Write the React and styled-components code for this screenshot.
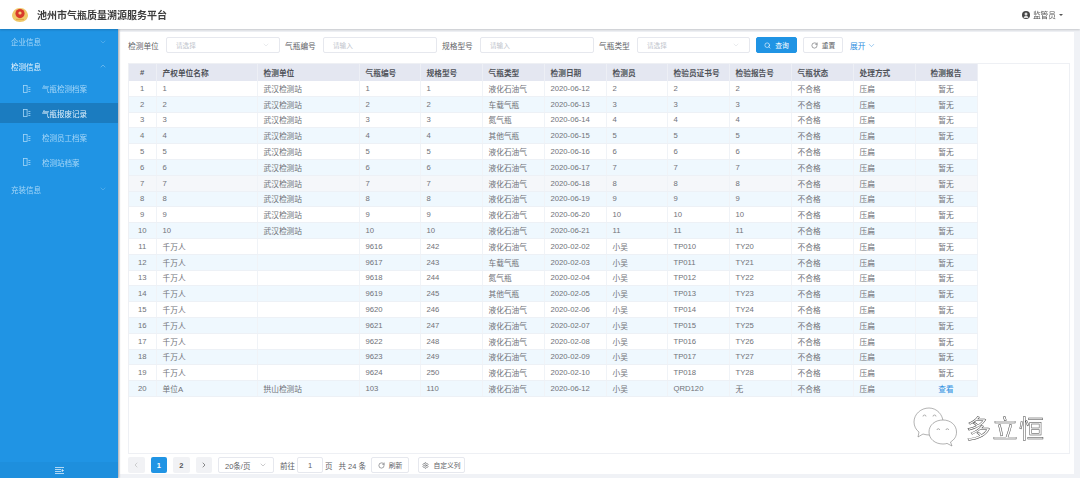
import React from "react";
import styled, { createGlobalStyle } from "styled-components";
import { ChevronDown, ChevronUp, ChevronLeft, ChevronRight, Search, RotateCw, Settings } from "lucide-react";

const GlobalStyle = createGlobalStyle`
  html, body { margin: 0; padding: 0; background: #fff; }
  body {
    font-family: "Liberation Sans", "Noto Sans CJK SC", sans-serif;
    color: #606266;
  }
  * { box-sizing: border-box; }
`;

const Page = styled.div`
  width: 1080px;
  height: 478px;
  overflow: hidden;
  position: relative;
`;

const Screen = styled.div`
  height: 100%;
  display: flex;
  flex-direction: column;
  filter: blur(0.6px);
`;

const Header = styled.header`
  height: 29px;
  flex: none;
  display: flex;
  align-items: center;
  padding: 0 17px 0 11px;
  background: #fff;
  box-shadow: 0 1px 2px rgba(0, 0, 0, 0.18);
  position: relative;
  z-index: 2;
`;

const Title = styled.h1`
  margin: 0 0 0 8px;
  font-size: 10px;
  font-weight: 600;
  color: #3d3d3d;
  flex: 1;
`;

const UserBox = styled.div`
  display: flex;
  align-items: center;
  gap: 3px;
  font-size: 7.7px;
  color: #555;
`;

const Caret = styled.span`
  width: 0;
  height: 0;
  border-left: 2px solid transparent;
  border-right: 2px solid transparent;
  border-top: 2px solid #555;
`;

const Body = styled.div`
  flex: 1;
  min-height: 0;
  display: flex;
  background: #f0f2f6;
`;

const Sidebar = styled.aside`
  width: 118px;
  flex: none;
  display: flex;
  flex-direction: column;
  background: #2094e4;
  box-shadow: 1px 0 2px rgba(0, 0, 0, 0.3);
  position: relative;
  z-index: 1;
`;

const Nav = styled.nav`
  flex: 1;
  padding-top: 0.5px;
`;

const NavGroup = styled.div`
  height: 24.5px;
  display: flex;
  align-items: center;
  justify-content: space-between;
  padding: 0 11px;
  font-size: 7.5px;
  color: ${p => (p.$open ? "#e4f2fc" : "#a5d6f7")};
`;

const NavItem = styled.div`
  height: 20px;
  margin-bottom: 4.6px;
  display: flex;
  align-items: center;
  gap: 11px;
  padding-left: 23px;
  font-size: 7.5px;
  color: ${p => (p.$active ? "#e4f2fc" : "#a5d6f7")};
  background: ${p => (p.$active ? "#1b7cc0" : "transparent")};
`;

const Collapse = styled.div`
  height: 16px;
  flex: none;
  display: flex;
  align-items: center;
  justify-content: center;
  background: #1e8fdd;
`;

const Main = styled.main`
  flex: 1;
  min-width: 0;
  margin: 3px 6px 4px 2px;
  padding: 5px 4px 0 8px;
  background: #fff;
  display: flex;
  flex-direction: column;
`;

const FilterBar = styled.div`
  height: 16px;
  flex: none;
  display: flex;
  align-items: center;
  margin-bottom: 10px;
`;

const FilterLabel = styled.label`
  width: 32px;
  flex: none;
  margin: 0 6px 0 ${p => p.$gap || 0}px;
  font-size: 7.7px;
  white-space: nowrap;
  color: #606266;
`;

const Field = styled.div`
  width: ${p => p.$w || 114}px;
  height: 16px;
  flex: none;
  display: flex;
  align-items: center;
  justify-content: space-between;
  padding: 0 9px;
  font-size: 6.6px;
  color: #c0c4cc;
  border: 1px solid #e6e8ee;
  border-radius: 2px;
  background: #fff;
`;

const Btn = styled.button`
  height: 16px;
  flex: none;
  display: flex;
  align-items: center;
  justify-content: center;
  gap: 4px;
  padding: 0;
  width: ${p => p.$w}px;
  margin-left: ${p => p.$ml || 0}px;
  font: inherit;
  font-size: 6.8px;
  color: ${p => (p.$primary ? "#fff" : "#606266")};
  background: ${p => (p.$primary ? "#2094e4" : "#fff")};
  border: 1px solid ${p => (p.$primary ? "#2094e4" : "#e6e8ee")};
  border-radius: 2px;
`;

const Expand = styled.span`
  display: flex;
  align-items: center;
  gap: 2px;
  margin-left: 7px;
  font-size: 7.7px;
  color: #2f8fe0;
`;

const TablePanel = styled.div`
  height: 391px;
  flex: none;
  border: 1px solid #eef0f4;
`;

const Table = styled.table`
  width: 848px;
  table-layout: fixed;
  border-collapse: collapse;
  font-size: 7.7px;
`;

const Th = styled.th`
  height: 16.5px;
  padding: 0 0 0 ${p => (p.$center ? 0 : 6)}px;
  background: #e4e7f1;
  color: #50535a;
  font-weight: 600;
  text-align: ${p => (p.$center ? "center" : "left")};
  border-right: 1px solid #edeff5;
  white-space: nowrap;
  overflow: hidden;
`;

const Td = styled.td`
  height: 15.8px;
  padding: 0 0 0 ${p => (p.$center ? 0 : 6)}px;
  color: ${p => (p.$link ? "#2f8fe0" : "#6f7278")};
  text-align: ${p => (p.$center ? "center" : "left")};
  border-right: 1px solid #f0f3f7;
  border-bottom: 1px solid #edf1f6;
  white-space: nowrap;
  overflow: hidden;
`;

const Tr = styled.tr`
  background: ${p => (p.$hover ? "#f5f7fa" : p.$striped ? "#eff8fe" : "#fff")};
`;

const Pager = styled.div`
  height: 16px;
  margin-top: 3px;
  flex: none;
  display: flex;
  align-items: center;
  font-size: 7.5px;
  color: #606266;
`;

const PageBtn = styled.span`
  width: 16.5px;
  height: 16px;
  flex: none;
  margin-right: 6px;
  display: flex;
  align-items: center;
  justify-content: center;
  font-weight: 700;
  border-radius: 2px;
  color: ${p => (p.$active ? "#fff" : "#555")};
  background: ${p => (p.$active ? "#2094e4" : "#f1f2f5")};
`;

const PagerText = styled.span`
  flex: none;
  margin-left: ${p => p.$ml || 0}px;
  white-space: nowrap;
`;

const PagerField = styled(Field)`
  margin-left: ${p => p.$ml || 0}px;
  padding: 0 6px;
  font-size: 7.5px;
  color: #606266;
  justify-content: ${p => (p.$center ? "center" : "space-between")};
`;

const Watermark = styled.div`
  position: absolute;
  left: 913px;
  top: 407px;
  display: flex;
  align-items: center;
  gap: 8px;
`;

const WatermarkText = styled.span`
  font-family: "Noto Sans CJK SC", sans-serif;
  font-size: 25px;
  letter-spacing: 1.5px;
  color: #fff;
  -webkit-text-stroke: 0.45px #3a3a3a;
`;

const types = ["液化石油气", "车载气瓶", "氮气瓶", "其他气瓶"];
const typeAt = i => types[i] || "液化石油气";

const day = n => String(n).padStart(2, "0");

const rows = [];
for (let i = 0; i < 10; i++) {
  const n = i + 1;
  rows.push([n, n, "武汉检测站", n, n, typeAt(i), `2020-06-${12 + i}`, n + 1, n + 1, n + 1]);
}
for (let i = 0; i < 9; i++) {
  rows.push([
    11 + i,
    "千万人",
    "",
    9616 + i,
    242 + i,
    typeAt(i),
    `2020-02-${day(2 + i)}`,
    "小吴",
    `TP0${10 + i}`,
    `TY${20 + i}`
  ]);
}
rows.push([20, "单位A", "拱山检测站", 103, 110, "液化石油气", "2020-06-12", "小吴", "QRD120", "无"]);

const columns = [
  ["#", 27],
  ["产权单位名称", 101],
  ["检测单位", 102],
  ["气瓶编号", 61],
  ["规格型号", 62],
  ["气瓶类型", 62],
  ["检测日期", 62],
  ["检测员", 61],
  ["检验员证书号", 62],
  ["检验报告号", 62],
  ["气瓶状态", 62],
  ["处理方式", 62],
  ["检测报告", 62]
];

const FileGlyph = () => (
  <svg width="8" height="8" viewBox="0 0 8 8" fill="none" stroke="#a5d6f7" strokeWidth="0.8">
    <rect x="0.5" y="0.5" width="3.6" height="7" />
    <path d="M5.4 2.5h2M5.4 4.5h2M5.4 6.5h2" />
  </svg>
);

const Emblem = () => (
  <svg width="18" height="16" viewBox="0 0 18 16">
    <path d="M1 8c0 4 3 7 8 7s8-3 8-7c-1-4-3-7-8-7S2 4 1 8z" fill="#f0c869" />
    <circle cx="9" cy="6.6" r="4.6" fill="#d8392b" />
    <circle cx="9" cy="6" r="1.6" fill="#f4cf77" />
    <path d="M5 12.5h8" stroke="#e2a94a" strokeWidth="1.2" />
  </svg>
);

const UserIcon = () => (
  <svg width="8" height="8" viewBox="0 0 8 8">
    <circle cx="4" cy="4" r="4" fill="#444" />
    <circle cx="4" cy="3" r="1.5" fill="#ddd" />
    <path d="M1.6 7c.3-1.5 1.3-2.2 2.4-2.2s2.1.7 2.4 2.2z" fill="#ddd" />
  </svg>
);

const MenuToggle = () => (
  <svg width="9" height="7" viewBox="0 0 9 7" stroke="#d5ebfb" strokeWidth="0.8" fill="none">
    <path d="M0 .5h9M0 2.5h6M0 4.5h6M0 6.5h9" />
    <path d="M7 2.5l1.5 1-1.5 1z" fill="#d5ebfb" />
  </svg>
);

const WechatIcon = () => (
  <svg width="45" height="40" viewBox="0 0 45 40" fill="#fff" stroke="#666" strokeWidth="0.5">
    <path d="M16 1C8 1 1 7 1 15c0 4 2 8 5 10l-1 5 5-3c2 .6 4 1 6 1 8 0 14-6 14-13S24 1 16 1z" />
    <path d="M30 13c-8 0-14 5-14 12s6 12 14 12c1.5 0 3-.2 4-.6l5 2.6-1.5-4c4-2.5 6-5.5 6-10 0-7-6-12-13.5-12z" />
    <path d="M10 9.5a1.5 1.5 0 013 0M20 9.5a1.5 1.5 0 013 0M24 23a1.3 1.3 0 012.6 0M33 23a1.3 1.3 0 012.6 0" />
  </svg>
);

export default function App() {
  return (
    <Page>
      <GlobalStyle />
      <Screen>
        <Header>
          <Emblem />
          <Title>池州市气瓶质量溯源服务平台</Title>
          <UserBox>
            <UserIcon />
            监管员
            <Caret />
          </UserBox>
        </Header>
        <Body>
          <Sidebar>
            <Nav>
              <NavGroup>
                企业信息
                <ChevronDown size={8} strokeWidth={1} />
              </NavGroup>
              <NavGroup $open>
                检测信息
                <ChevronUp size={8} strokeWidth={1} />
              </NavGroup>
              <NavItem><FileGlyph />气瓶检测档案</NavItem>
              <NavItem $active><FileGlyph />气瓶报废记录</NavItem>
              <NavItem><FileGlyph />检测员工档案</NavItem>
              <NavItem><FileGlyph />检测站档案</NavItem>
              <NavGroup>
                充装信息
                <ChevronDown size={8} strokeWidth={1} />
              </NavGroup>
            </Nav>
            <Collapse>
              <MenuToggle />
            </Collapse>
          </Sidebar>
          <Main>
            <FilterBar>
              <FilterLabel>检测单位</FilterLabel>
              <Field>
                请选择
                <ChevronDown size={8} strokeWidth={1} />
              </Field>
              <FilterLabel $gap={5}>气瓶编号</FilterLabel>
              <Field>请输入</Field>
              <FilterLabel $gap={5}>规格型号</FilterLabel>
              <Field>请输入</Field>
              <FilterLabel $gap={5}>气瓶类型</FilterLabel>
              <Field $w={113}>
                请选择
                <ChevronDown size={8} strokeWidth={1} />
              </Field>
              <Btn $primary $w={41} $ml={6}>
                <Search size={7} />
                查询
              </Btn>
              <Btn $w={40} $ml={6}>
                <RotateCw size={7} />
                重置
              </Btn>
              <Expand>
                展开
                <ChevronDown size={9} strokeWidth={1.2} />
              </Expand>
            </FilterBar>
            <TablePanel>
              <Table>
                <colgroup>
                  {columns.map(([name, w]) => (
                    <col key={name} style={{ width: w }} />
                  ))}
                </colgroup>
                <thead>
                  <tr>
                    {columns.map(([name], i) => (
                      <Th key={name} $center={i === 0 || i === 12}>{name}</Th>
                    ))}
                  </tr>
                </thead>
                <tbody>
                  {rows.map((row, r) => (
                    <Tr key={r} $striped={r % 2 === 1} $hover={r === 6}>
                      {row.map((cell, c) => (
                        <Td key={c} $center={c === 0}>{cell}</Td>
                      ))}
                      <Td>不合格</Td>
                      <Td>压扁</Td>
                      <Td $center $link={r === 19}>{r === 19 ? "查看" : "暂无"}</Td>
                    </Tr>
                  ))}
                </tbody>
              </Table>
            </TablePanel>
            <Pager>
              <PageBtn><ChevronLeft size={8} color="#bbb" /></PageBtn>
              <PageBtn $active>1</PageBtn>
              <PageBtn>2</PageBtn>
              <PageBtn><ChevronRight size={8} /></PageBtn>
              <PagerField $w={56}>
                20条/页
                <ChevronDown size={8} strokeWidth={1} />
              </PagerField>
              <PagerText $ml={6}>前往</PagerText>
              <PagerField $w={26} $ml={2} $center>1</PagerField>
              <PagerText $ml={2}>页</PagerText>
              <PagerText $ml={6}>共 24 条</PagerText>
              <Btn $w={38} $ml={5}>
                <RotateCw size={7} />
                刷新
              </Btn>
              <Btn $w={47} $ml={9}>
                <Settings size={7} />
                自定义列
              </Btn>
            </Pager>
          </Main>
        </Body>
      </Screen>
      <Watermark>
        <WechatIcon />
        <WatermarkText>多立恒</WatermarkText>
      </Watermark>
    </Page>
  );
}
